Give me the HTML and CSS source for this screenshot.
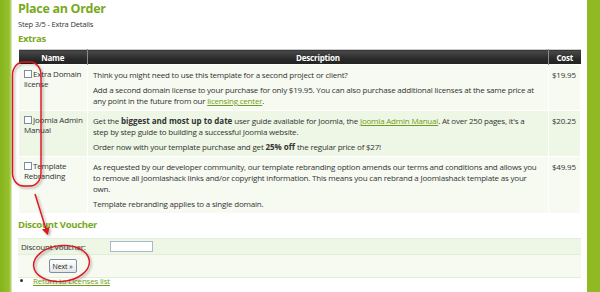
FILE: index.html
```html
<!DOCTYPE html>
<html lang="en">
<head>
  <meta charset="UTF-8">
  <title>Place an Order</title>
  <link rel="stylesheet" href="styles.css">
</head>
<body>
  <div class="pagina">
    <div class="barra barra-izq"></div>

    <div class="contenido">
      <h1>Place an Order</h1>
      <p class="paso">Step 3/5 - Extra Details</p>

      <h2>Extras</h2>
      <table class="extras">
        <thead>
          <tr><th class="col-nombre">Name</th><th>Description</th><th class="col-precio">Cost</th></tr>
        </thead>
        <tbody>
          <tr class="fila-a">
            <td><input type="checkbox" class="marca">Extra Domain license</td>
            <td class="desc">
              <p>Think you might need to use this template for a second project or client?</p>
              <p>Add a second domain license to your purchase for only $19.95. You can also purchase additional licenses at the same price at any point in the future from our <a href="#">licensing center</a>.</p>
            </td>
            <td>$19.95</td>
          </tr>
          <tr class="fila-b">
            <td><input type="checkbox" class="marca">Joomla Admin Manual</td>
            <td class="desc">
              <p>Get the <b>biggest and most up to date</b> user guide available for Joomla, the <a href="#">Joomla Admin Manual</a>. At over 250 pages, it's a step by step guide to building a successful Joomla website.</p>
              <p>Order now with your template purchase and get <b>25% off</b> the regular price of $27!</p>
            </td>
            <td>$20.25</td>
          </tr>
          <tr class="fila-a">
            <td><input type="checkbox" class="marca">Template Rebranding</td>
            <td class="desc">
              <p>As requested by our developer community, our template rebranding option amends our terms and conditions and allows you to remove all Joomlashack links and/or copyright information. This means you can rebrand a Joomlashack template as your own.</p>
              <p>Template rebranding applies to a single domain.</p>
            </td>
            <td>$49.95</td>
          </tr>
        </tbody>
      </table>

      <h2 class="titulo-cupon">Discount Voucher</h2>
      <table class="cupon">
        <tr class="fila-b">
          <td class="col-etiqueta">Discount Voucher:</td>
          <td><input type="text" class="campo"></td>
        </tr>
        <tr class="fila-a">
          <td class="centro"><button class="siguiente">Next &raquo;</button></td>
          <td></td>
        </tr>
      </table>

      <ul class="enlaces">
        <li><a href="#">Return to Licenses list</a></li>
      </ul>
    </div>

    <div class="barra barra-der"></div>
  </div>

  <!-- marcas rojas dibujadas encima de la captura -->
  <svg class="anotacion" width="600" height="292" viewBox="0 0 600 292">
    <defs>
      <filter id="sombra" x="-20%" y="-20%" width="140%" height="140%">
        <feDropShadow dx="1.5" dy="1.5" stdDeviation="1" flood-color="#000" flood-opacity="0.35"/>
      </filter>
      <marker id="punta" markerWidth="8" markerHeight="8" refX="6" refY="4" orient="auto" markerUnits="userSpaceOnUse">
        <path d="M0,0 L7,4 L0,8 z" fill="#e0141b"/>
      </marker>
    </defs>
    <g fill="none" stroke="#e0141b" stroke-width="1.4" filter="url(#sombra)">
      <rect x="12.5" y="62" width="28.5" height="124" rx="11" ry="13"/>
      <line x1="35" y1="194" x2="47.5" y2="234" marker-end="url(#punta)"/>
      <ellipse cx="61.5" cy="263.5" rx="28" ry="18" transform="rotate(-6 61.5 263.5)"/>
    </g>
  </svg>
</body>
</html>
```

FILE: styles.css
```css
html, body {
  margin: 0;
  height: 100%;
  overflow: hidden;
  background: #fff;
}

body {
  font-family: 'Open Sans', 'DejaVu Sans', sans-serif;
  font-size: 8px;
  letter-spacing: -0.2px;
  color: #333;
  position: relative;
}

b {
  letter-spacing: 0;
}

.pagina {
  display: flex;
  height: 100%;
}

.barra {
  flex: none;
  height: 100%;
}

.barra-izq {
  width: 12px;
  background: linear-gradient(to right, #86b41c, #95c02c 75%, #b9d772 92%, #f2f7e6);
}

.barra-der {
  width: 13px;
  background: #8fba22;
}

.contenido {
  flex: 1;
  padding: 0 6px;
}

h1 {
  color: #79a921;
  font-size: 12.5px;
  letter-spacing: -0.3px;
  font-weight: bold;
  margin: 0;
  line-height: 17px;
}

.paso {
  font-size: 7.6px;
  margin: 2px 0 0 0;
  line-height: 10px;
}

h2 {
  color: #79a921;
  font-size: 9.5px;
  letter-spacing: -0.3px;
  font-weight: bold;
  margin: 3px 0 3px 0;
  line-height: 14px;
}

table {
  width: 100%;
  border-collapse: collapse;
  table-layout: fixed;
}

.extras th {
  box-sizing: border-box;
  background: linear-gradient(#4a4a4a, #2a2a2a 60%, #222);
  color: #fff;
  font-weight: bold;
  height: 15px;
  padding: 0;
  border-left: 1px solid #8a8a8a;
  border-right: 1px solid #8a8a8a;
  border-top: 1px solid #ccc;
}

.extras th:first-child { border-left: none; }
.extras th:last-child { border-right: none; }

.col-nombre { width: 69px; }
.col-precio { width: 32px; }

.extras td {
  vertical-align: top;
  padding: 4px 4px 4px 5px;
  line-height: 11px;
  border: 1px solid #fff;
}

.extras td:first-child {
  line-height: 10px;
}

.extras td.desc {
  padding-right: 11px;
}

.extras td:last-child {
  padding-left: 3px;
}

.extras p {
  margin: 0 0 4px 0;
}

.extras p:last-child {
  margin-bottom: 0;
}

.fila-a td { background: #f6faf1; }
.fila-b td { background: #eef6e6; }

a {
  color: #6f9d18;
}

.marca {
  -webkit-appearance: none;
  appearance: none;
  width: 8px;
  height: 8px;
  margin: 0 1px 0 0;
  border: 1px solid #7b8da6;
  background: #fff;
  vertical-align: -1px;
}

.titulo-cupon {
  margin-top: 4px;
  margin-bottom: 6px;
}

.cupon td {
  border-top: 1px solid #e2efd6;
  border-bottom: 1px solid #e2efd6;
  padding: 0 3px;
  height: 15px;
}

.cupon tr:last-child td {
  height: 22px;
}

.col-etiqueta {
  width: 83px;
}

.centro {
  text-align: center;
}

.campo {
  width: 41px;
  height: 9px;
  padding: 0;
  border: 1px solid #a9b9cc;
  display: block;
}

.siguiente {
  font-family: 'Open Sans', sans-serif;
  font-size: 7px;
  letter-spacing: -0.1px;
  color: #222;
  width: 28px;
  height: 14px;
  padding: 0;
  border: 1px solid #7d8ea8;
  border-radius: 2px;
  background: linear-gradient(#fefefe, #e6e6e6);
}

.enlaces {
  margin: -2px 0 0 0;
  padding-left: 15px;
  line-height: 9px;
}

.anotacion {
  position: absolute;
  left: 0;
  top: 0;
  pointer-events: none;
}
```
